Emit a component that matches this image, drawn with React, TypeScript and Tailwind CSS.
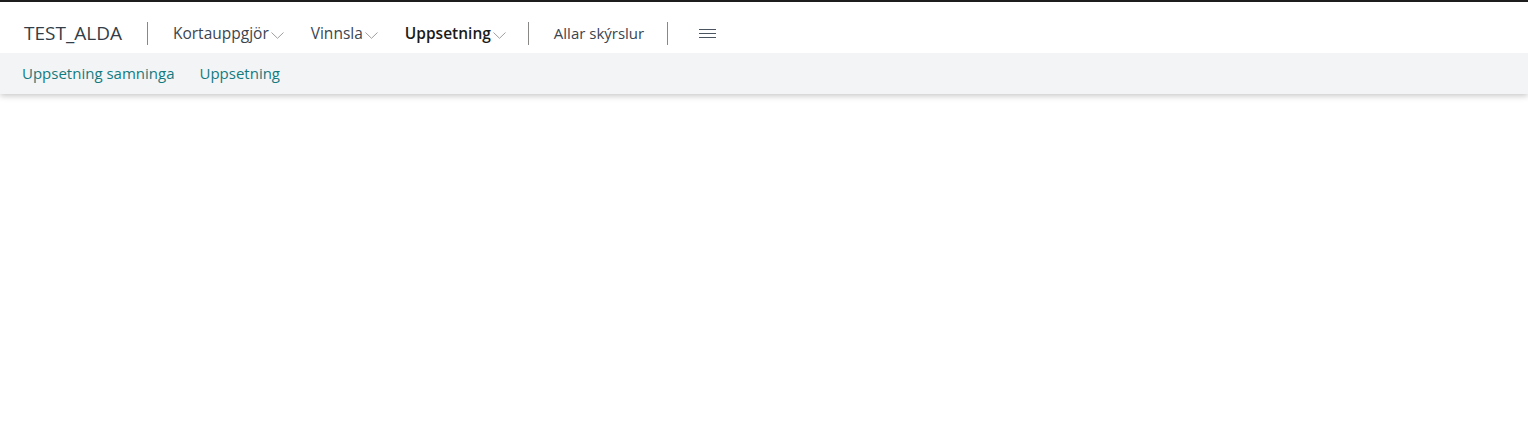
import React from 'react';

const Chevron = () => (
  <svg width="13" height="7" viewBox="0 0 13 7" className="ml-[2px] mt-[4px]" fill="none">
    <path d="M0.5 0.5 L6.5 6.3 L12.5 0.5" stroke="#a19f9d" strokeWidth="1" />
  </svg>
);

const Divider = () => <div className="h-[23px] w-px bg-[#8a8886]" />;

const NavItem = ({ label, bold }: { label: string; bold?: boolean }) => (
  <button className={`flex items-center ${bold ? 'font-semibold text-[#1b1b1b]' : 'text-[#3b4550]'}`}>
    <span>{label}</span>
    <Chevron />
  </button>
);

export default function App() {
  return (
    <div className="min-h-screen bg-white font-['Open_Sans',sans-serif]">
      <div className="h-[2px] bg-[#1f1f1f]" />
      <div className="relative z-10 shadow-[0_2px_6px_rgba(0,0,0,0.22)]">
        <header className="flex h-[51px] items-center bg-white pl-6 pt-[12px] text-[15.5px]">
          <span className="mr-[25px] text-[19px] text-[#333d47]">TEST_ALDA</span>
          <Divider />
          <nav className="ml-[25px] flex items-center gap-[27px]">
            <NavItem label="Kortauppgjör" />
            <NavItem label="Vinnsla" />
            <NavItem label="Uppsetning" bold />
          </nav>
          <div className="ml-[22px]"><Divider /></div>
          <span className="ml-[25px] mr-[23px] text-[15px] text-[#3b4550]">Allar skýrslur</span>
          <Divider />
          <button className="ml-[31px] flex flex-col gap-[3px]">
            <span className="h-px w-[17px] bg-[#4a5560]" />
            <span className="h-px w-[17px] bg-[#4a5560]" />
            <span className="h-px w-[17px] bg-[#4a5560]" />
          </button>
        </header>
        <div className="flex h-[41px] items-center gap-[25px] bg-[#f3f4f6] pl-[22px] text-[15px] text-[#137b80]">
          <span>Uppsetning samninga</span>
          <span>Uppsetning</span>
        </div>
      </div>
    </div>
  );
}
